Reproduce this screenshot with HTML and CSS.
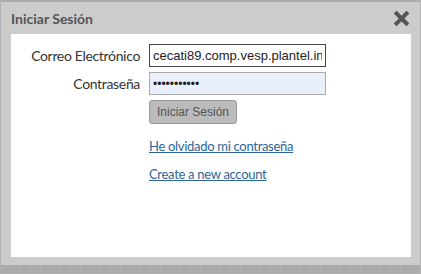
FILE: index.html
```html
<!DOCTYPE html>
<html>
<head>
    <title>Iniciar Sesión</title>
    <link rel="stylesheet" href="styles.css">
</head>
<body>
    <div class="dialog">
        <div class="dialog-title">
            <span>Iniciar Sesión</span>
            <svg class="close" width="15" height="15" viewBox="0 0 15 15">
                <path d="M2.5 2.5 L12.5 12.5 M12.5 2.5 L2.5 12.5" stroke="#555" stroke-width="4" stroke-linecap="square"/>
            </svg>
        </div>
        <div class="dialog-body">
            <form class="login-form">
                <label for="email">Correo Electrónico</label>
                <input type="text" id="email" class="focused" value="cecati89.comp.vesp.plantel.info">

                <label for="password">Contraseña</label>
                <input type="password" id="password" class="autofill" value="abcdefghijk">

                <span></span>
                <div><button type="button">Iniciar Sesión</button></div>

                <span></span>
                <div class="links">
                    <a href="#">He olvidado mi contraseña</a>
                    <a href="#">Create a new account</a>
                </div>
            </form>
        </div>
    </div>
</body>
</html>
```

FILE: styles.css
```css
body {
    margin: 0;
    height: 274px;
    background-color: #ababab;
    background-image:
        repeating-linear-gradient(90deg, #b3b3b3 0, #b3b3b3 1px, transparent 1px, transparent 10px),
        repeating-linear-gradient(0deg, #b3b3b3 0, #b3b3b3 1px, transparent 1px, transparent 10px);
    font-family: Lato, "Open Sans", sans-serif;
    overflow: hidden;
}

.dialog {
    margin: 2px 1px 0 1px;
    width: 419px;
    height: 263px;
    background-color: #ccc;
    box-sizing: border-box;
    padding: 0 9px 8px 10px;
    display: flex;
    flex-direction: column;
}

.dialog-title {
    height: 32px;
    display: flex;
    align-items: center;
    justify-content: space-between;
    font-size: 14px;
    font-weight: bold;
    color: #555;
}

.close {
    margin-right: 2px;
}

.dialog-body {
    flex: 1;
    background-color: #fff;
    padding-top: 10px;
}

.login-form {
    display: grid;
    grid-template-columns: 129px 177px;
    column-gap: 9px;
    row-gap: 5px;
    align-items: center;
}

label {
    text-align: right;
    font-size: 14px;
    letter-spacing: -0.33px;
    color: #333;
}

input {
    height: 23px;
    box-sizing: border-box;
    padding: 0 3px;
    font-family: "Liberation Sans", Arial, sans-serif;
    font-size: 13px;
    color: #222;
    border: 1px solid #aaa;
    outline: none;
}

input.focused {
    border-color: #444;
}

input.autofill {
    background-color: #e8f0fe;
    font-size: 12px;
}

button {
    height: 24px;
    padding: 0 7px;
    background-color: #bbb;
    border: 1px solid #999;
    border-radius: 3px;
    font-family: "Liberation Sans", Arial, sans-serif;
    font-size: 12px;
    color: #555;
}

.links {
    display: flex;
    flex-direction: column;
    gap: 12px;
    padding-top: 9px;
}

.links a {
    font-size: 13px;
    letter-spacing: -0.3px;
    color: #2d6599;
    text-decoration: underline;
    align-self: flex-start;
}
```
